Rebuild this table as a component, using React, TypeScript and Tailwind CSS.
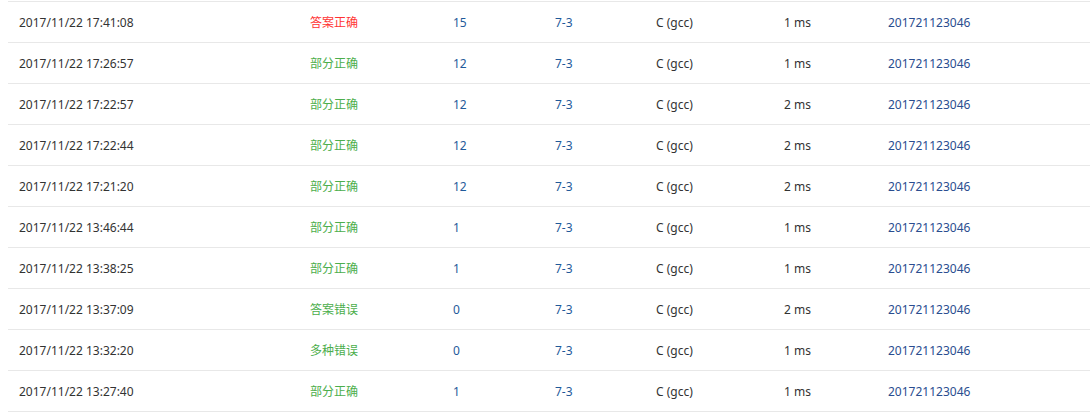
import React from "react";

type Row = { t: string; s: string; red?: boolean; score: string; time: string };

const rows: Row[] = [
  { t: "2017/11/22 17:41:08", s: "答案正确", red: true, score: "15", time: "1 ms" },
  { t: "2017/11/22 17:26:57", s: "部分正确", score: "12", time: "1 ms" },
  { t: "2017/11/22 17:22:57", s: "部分正确", score: "12", time: "2 ms" },
  { t: "2017/11/22 17:22:44", s: "部分正确", score: "12", time: "2 ms" },
  { t: "2017/11/22 17:21:20", s: "部分正确", score: "12", time: "2 ms" },
  { t: "2017/11/22 13:46:44", s: "部分正确", score: "1", time: "1 ms" },
  { t: "2017/11/22 13:38:25", s: "部分正确", score: "1", time: "1 ms" },
  { t: "2017/11/22 13:37:09", s: "答案错误", score: "0", time: "2 ms" },
  { t: "2017/11/22 13:32:20", s: "多种错误", score: "0", time: "1 ms" },
  { t: "2017/11/22 13:27:40", s: "部分正确", score: "1", time: "1 ms" },
];

export default function App() {
  return (
    <div
      className="w-[1090px] h-[418px] bg-white pt-px pl-2 text-[12px]"
      style={{ fontFamily: '"Noto Sans", "Noto Sans CJK SC", sans-serif' }}
    >
      <div className="border-b border-[#e8e8e8]">
        {rows.map((r, i) => (
          <div key={i} className="flex items-center h-[41px] border-t border-[#e8e8e8] pl-[11px] pt-[2px]">
            <div className="w-[291px] text-[#333]">{r.t}</div>
            <div className={`w-[143px] ${r.red ? "text-[#f33]" : "text-[#4cae4c]"}`}>{r.s}</div>
            <div className="w-[102px] text-[#1f5a9a]">{r.score}</div>
            <div className="w-[101px] text-[#1f5a9a]">7-3</div>
            <div className="w-[128px] text-[#333]">C (gcc)</div>
            <div className="w-[104px] text-[#333]">{r.time}</div>
            <div className="text-[#2a4d8f]">201721123046</div>
          </div>
        ))}
      </div>
    </div>
  );
}
